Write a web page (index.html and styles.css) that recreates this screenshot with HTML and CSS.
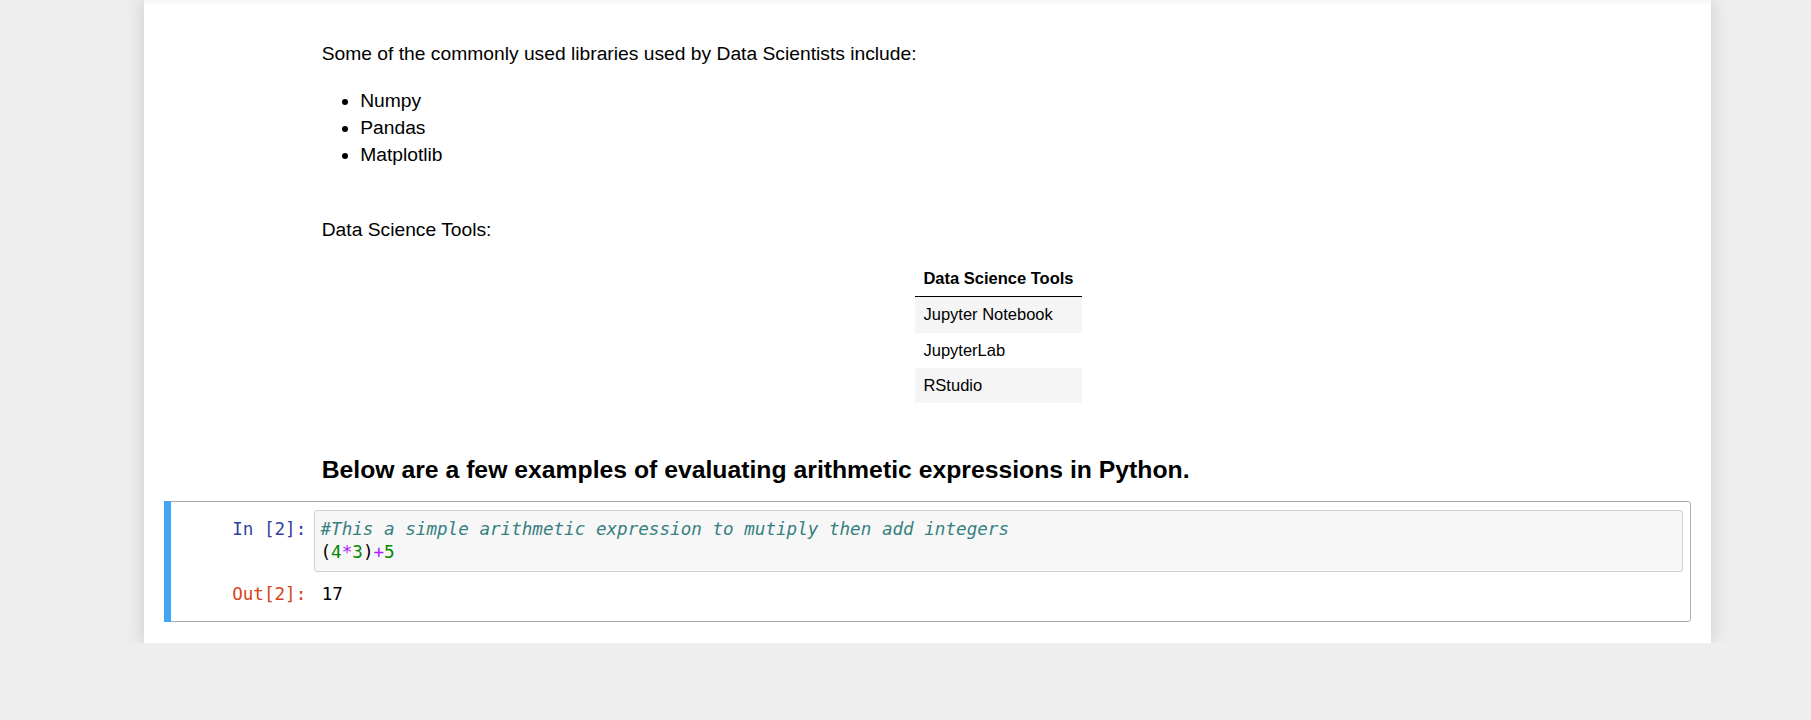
FILE: index.html
```html
<!DOCTYPE html>
<html lang="en">
<head>
<meta charset="utf-8">
<title>Notebook</title>
<link rel="stylesheet" href="styles.css">
</head>
<body>
<div class="notebook">
  <div class="cell md-cell">
    <div class="prompt"></div>
    <div class="rendered">
      <p class="intro">Some of the commonly used libraries used by Data Scientists include:</p>
      <ul class="libs">
        <li>Numpy</li>
        <li>Pandas</li>
        <li>Matplotlib</li>
      </ul>
    </div>
  </div>

  <div class="cell md-cell">
    <div class="prompt"></div>
    <div class="rendered">
      <p class="tools-title">Data Science Tools:</p>
      <table class="tools">
        <thead>
          <tr><th>Data Science Tools</th></tr>
        </thead>
        <tbody>
          <tr><td>Jupyter Notebook</td></tr>
          <tr><td>JupyterLab</td></tr>
          <tr><td>RStudio</td></tr>
        </tbody>
      </table>
    </div>
  </div>

  <div class="cell md-cell">
    <div class="prompt"></div>
    <div class="rendered">
      <h3 class="heading">Below are a few examples of evaluating arithmetic expressions in Python.</h3>
    </div>
  </div>

  <div class="cell code-cell selected">
    <div class="input-row">
      <div class="prompt in-prompt">In&nbsp;[2]:</div>
      <div class="input-area">
        <pre class="code"><span class="cm-comment">#This a simple arithmetic expression to mutiply then add integers</span>
<span class="cm-paren">(</span><span class="cm-number">4</span><span class="cm-op">*</span><span class="cm-number">3</span><span class="cm-paren">)</span><span class="cm-op">+</span><span class="cm-number">5</span></pre>
      </div>
    </div>
    <div class="output-row">
      <div class="prompt out-prompt">Out[2]:</div>
      <pre class="output-text">17</pre>
    </div>
  </div>
</div>
</body>
</html>
```
FILE: styles.css
```css
html, body {
  margin: 0;
  padding: 0;
}

body {
  background: #eeeeee;
  font-family: "Liberation Sans", Arial, sans-serif;
  color: #000;
}

.notebook {
  box-sizing: border-box;
  width: 1567px;
  margin-left: 144px;
  padding: 0 20px 20.7px 20px;
  background: linear-gradient(rgba(87, 87, 87, 0.06), rgba(87, 87, 87, 0) 6px), #ffffff;
  box-shadow: 0 0 16.5px 1.4px rgba(87, 87, 87, 0.2);
}

.cell {
  border-radius: 2.75px;
}

.md-cell {
  display: flex;
  padding: 0 8px;
}

.prompt {
  box-sizing: border-box;
  width: 142px;
  flex: none;
  font-family: "DejaVu Sans Mono", "Liberation Mono", monospace;
  font-size: 17.6px;
  line-height: 23.5px;
  text-align: right;
  padding-right: 7.7px;
}

.rendered {
  flex: 1;
  padding: 0 7.7px;
  font-size: 19.25px;
}

.intro {
  margin: 40.3px 0 0;
  line-height: 27.5px;
}

.libs {
  margin: 19.5px 0 0;
  padding-left: 38.5px;
  line-height: 27px;
  list-style: disc;
}

.tools-title {
  margin: 47.3px 0 0;
  line-height: 27.5px;
}

.tools {
  margin: 17.7px auto 0;
  border-collapse: collapse;
  border-spacing: 0;
  font-size: 16.5px;
  color: #000;
}

.tools thead {
  border-bottom: 1.4px solid #000;
}

.tools th,
.tools td {
  text-align: left;
  padding: 8.2px 8.25px;
  line-height: 19px;
}

.tools th {
  font-weight: bold;
}

.tools tbody tr:nth-child(odd) {
  background: #f5f5f5;
}

.heading {
  margin: 52.9px 0 0;
  font-size: 24.75px;
  font-weight: bold;
  line-height: 27.2px;
}

.code-cell {
  margin-top: 17.7px;
  border: 1px solid transparent;
  padding: 8px 7px 7px 7px;
}

.selected {
  position: relative;
  border-color: #ababab;
}

.selected::before {
  content: "";
  position: absolute;
  left: -1px;
  top: -1px;
  width: 7px;
  height: calc(100% + 2px);
  background: #42a5f5;
}

.input-row,
.output-row {
  display: flex;
}

.in-prompt {
  color: #303f9f;
  padding-top: 7.5px;
}

.out-prompt {
  color: #d84315;
}

.input-area {
  flex: 1;
  border: 1px solid #cfcfcf;
  border-radius: 2.75px;
  background: #f7f7f7;
  padding: 6.5px 0 6.5px;
}

.code {
  margin: 0;
  padding: 0 5.5px;
  font-family: "DejaVu Sans Mono", "Liberation Mono", monospace;
  font-size: 17.6px;
  line-height: 23.5px;
  color: #000;
}

.cm-comment {
  color: #358080;
  font-style: italic;
}

.cm-number {
  color: #008800;
}

.cm-op {
  color: #aa22ff;
}

.cm-paren {
  color: #000;
}

.output-row {
  padding: 11px 0 7.8px;
}

.output-text {
  margin: 0;
  padding-left: 7.7px;
  font-family: "DejaVu Sans Mono", "Liberation Mono", monospace;
  font-size: 17.6px;
  line-height: 23.5px;
  color: #000;
}
```
